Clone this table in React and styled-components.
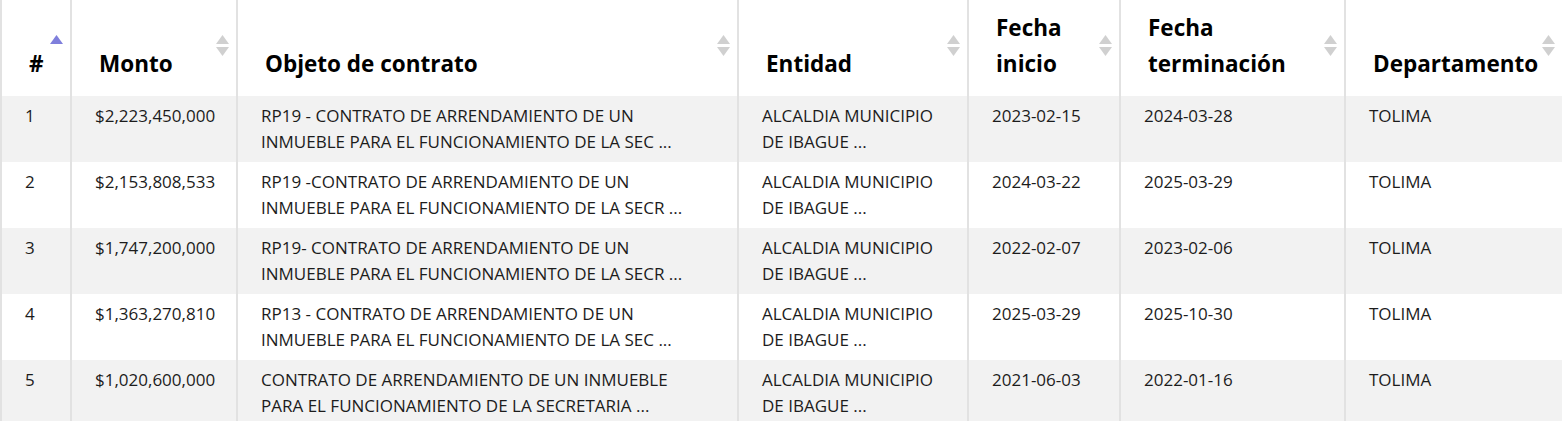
import React from "react";
import styled, { createGlobalStyle } from "styled-components";

const GlobalStyle = createGlobalStyle`
  body {
    margin: 0;
    background: #ffffff;
    font-family: "Open Sans", "Noto Sans", sans-serif;
  }
`;

const COLUMNS = "70px 166px 501px 230px 152px 225px 218px";

const Table = styled.div`
  width: 1562px;
  overflow: hidden;
`;

const Row = styled.div`
  display: grid;
  grid-template-columns: ${COLUMNS};
  background: ${(props) => (props.$striped ? "#f2f2f2" : "#ffffff")};
`;

const HeadCell = styled.div`
  display: flex;
  justify-content: space-between;
  height: 96px;
  box-sizing: border-box;
  padding: 0 7px 14px 27px;
  border-left: 2px solid #e2e2e2;
`;

const HeadLabel = styled.span`
  align-self: flex-end;
  font-size: 22.5px;
  font-weight: 700;
  line-height: 36px;
  color: #000000;
  white-space: nowrap;
`;

const SortIcon = styled.svg`
  align-self: center;
  flex-shrink: 0;
  margin-top: 9px;
`;

const Cell = styled.div`
  height: 66px;
  box-sizing: border-box;
  padding: 7px 10px 0 23px;
  border-left: 2px solid #e2e2e2;
  font-size: 17px;
  line-height: 26px;
  color: #1c1c1c;
  white-space: nowrap;
`;

const Line = styled.div``;

const Sort = ({ active }) => (
  <SortIcon width="13" height="22" viewBox="0 0 13 22">
    <path d="M6.5 0 L13 9 L0 9 Z" fill={active ? "#7f7fdc" : "#d0d0d0"} />
    {!active && <path d="M0 12 L13 12 L6.5 21 Z" fill="#d0d0d0" />}
  </SortIcon>
);

const headers = [
  { label: "#", active: true },
  { label: "Monto" },
  { label: "Objeto de contrato" },
  { label: "Entidad" },
  { label: ["Fecha", "inicio"] },
  { label: ["Fecha", "terminación"] },
  { label: "Departamento" },
];

const contracts = [
  {
    id: 1,
    monto: "$2,223,450,000",
    objeto: [
      "RP19 - CONTRATO DE ARRENDAMIENTO DE UN",
      "INMUEBLE PARA EL FUNCIONAMIENTO DE LA SEC ...",
    ],
    inicio: "2023-02-15",
    fin: "2024-03-28",
  },
  {
    id: 2,
    monto: "$2,153,808,533",
    objeto: [
      "RP19 -CONTRATO DE ARRENDAMIENTO DE UN",
      "INMUEBLE PARA EL FUNCIONAMIENTO DE LA SECR ...",
    ],
    inicio: "2024-03-22",
    fin: "2025-03-29",
  },
  {
    id: 3,
    monto: "$1,747,200,000",
    objeto: [
      "RP19- CONTRATO DE ARRENDAMIENTO DE UN",
      "INMUEBLE PARA EL FUNCIONAMIENTO DE LA SECR ...",
    ],
    inicio: "2022-02-07",
    fin: "2023-02-06",
  },
  {
    id: 4,
    monto: "$1,363,270,810",
    objeto: [
      "RP13 - CONTRATO DE ARRENDAMIENTO DE UN",
      "INMUEBLE PARA EL FUNCIONAMIENTO DE LA SEC ...",
    ],
    inicio: "2025-03-29",
    fin: "2025-10-30",
  },
  {
    id: 5,
    monto: "$1,020,600,000",
    objeto: [
      "CONTRATO DE ARRENDAMIENTO DE UN INMUEBLE",
      "PARA EL FUNCIONAMIENTO DE LA SECRETARIA ...",
    ],
    inicio: "2021-06-03",
    fin: "2022-01-16",
  },
];

const Lines = ({ lines }) =>
  lines.map((text) => <Line key={text}>{text}</Line>);

export default function App() {
  return (
    <>
      <GlobalStyle />
      <Table>
        <Row>
          {headers.map((h, i) => (
            <HeadCell key={i}>
              <HeadLabel>
                {Array.isArray(h.label) ? (
                  <>
                    {h.label[0]}
                    <br />
                    {h.label[1]}
                  </>
                ) : (
                  h.label
                )}
              </HeadLabel>
              <Sort active={h.active} />
            </HeadCell>
          ))}
        </Row>
        {contracts.map((c, i) => (
          <Row key={c.id} $striped={i % 2 === 0}>
            <Cell>{c.id}</Cell>
            <Cell>{c.monto}</Cell>
            <Cell>
              <Lines lines={c.objeto} />
            </Cell>
            <Cell>
              <Lines lines={["ALCALDIA MUNICIPIO", "DE IBAGUE ..."]} />
            </Cell>
            <Cell>{c.inicio}</Cell>
            <Cell>{c.fin}</Cell>
            <Cell>TOLIMA</Cell>
          </Row>
        ))}
      </Table>
    </>
  );
}
